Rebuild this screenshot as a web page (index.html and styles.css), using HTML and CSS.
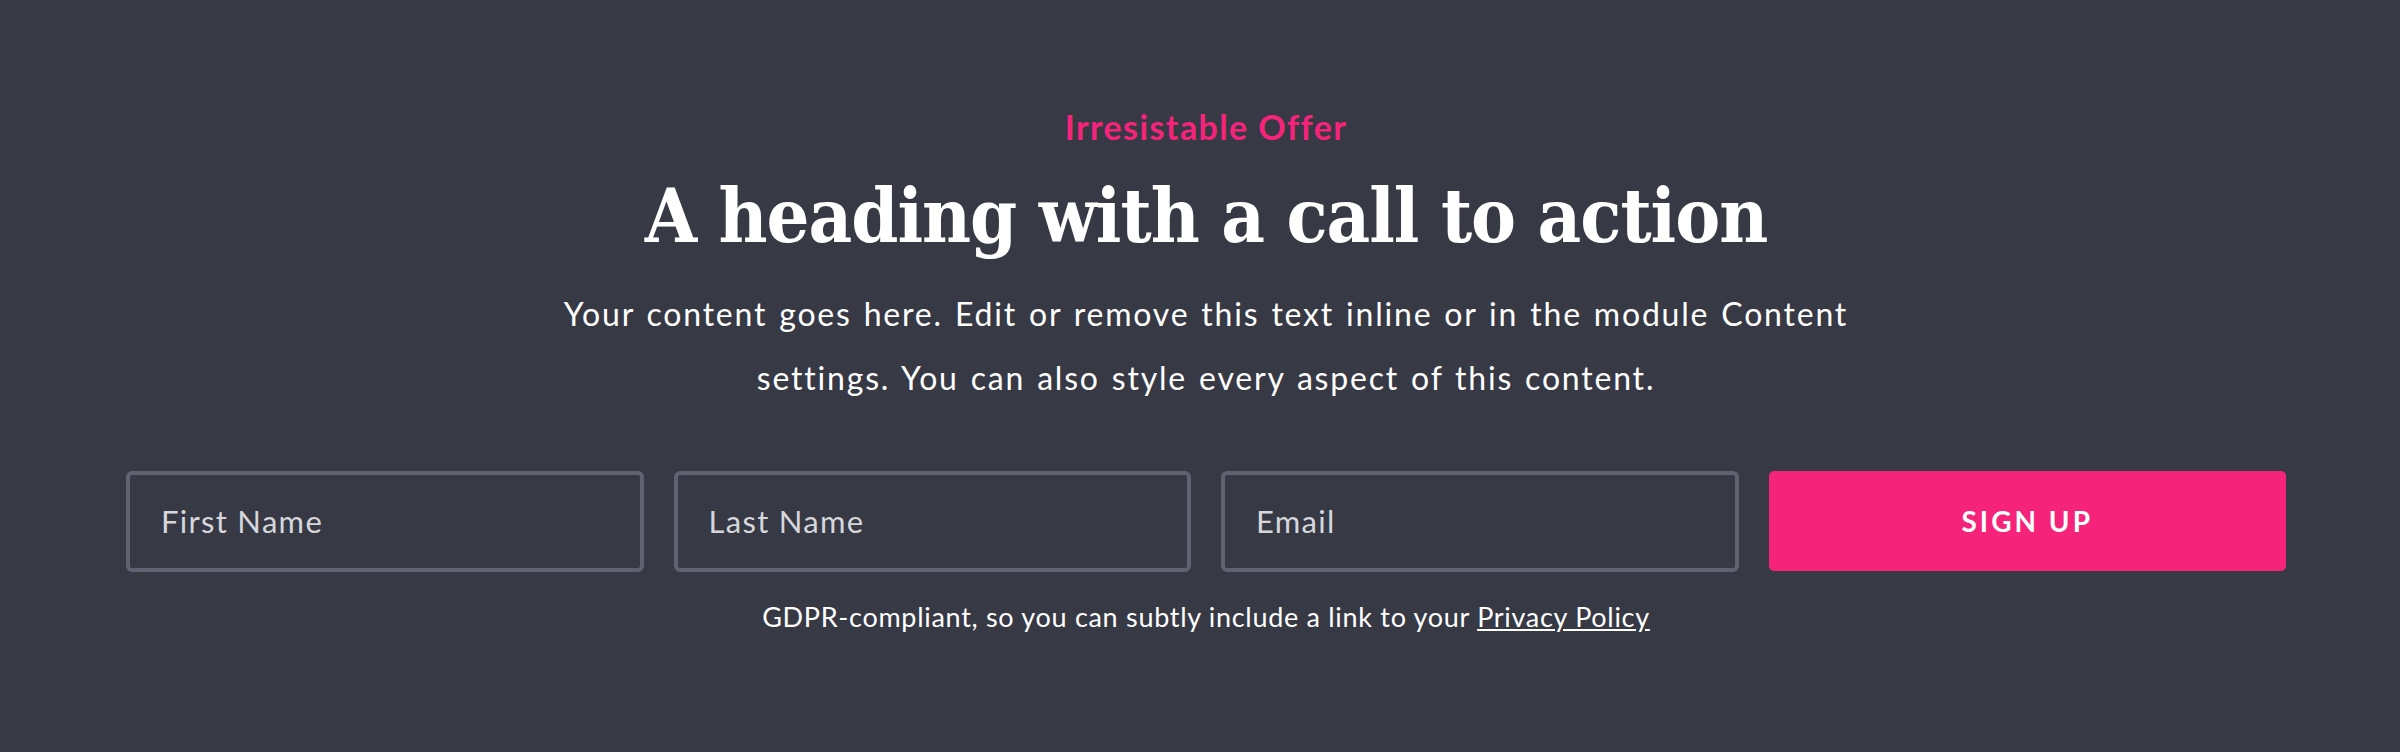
FILE: index.html
```html
<!DOCTYPE html>
<html lang="en">
<head>
<meta charset="UTF-8">
<meta name="viewport" content="width=device-width, initial-scale=1.0">
<title>Irresistable Offer</title>
<link rel="stylesheet" href="styles.css">
</head>
<body>
<section class="cta">
  <div class="cta-inner">
    <p class="eyebrow">Irresistable Offer</p>
    <h2 class="title">A heading with a call to action</h2>
    <p class="lead">Your content goes here. Edit or remove this text inline or in the module Content settings. You can also style every aspect of this content.</p>

    <form class="signup" onsubmit="return false">
      <input type="text" class="field" placeholder="First Name">
      <input type="text" class="field" placeholder="Last Name">
      <input type="email" class="field" placeholder="Email">
      <button type="submit" class="signup-btn">Sign Up</button>
    </form>

    <p class="note">GDPR-compliant, so you can subtly include a link to your <a href="#">Privacy Policy</a></p>
  </div>
</section>
</body>
</html>
```

FILE: styles.css
```css
* {
  box-sizing: border-box;
}
body {
  margin: 0;
  background: #373945;
  font-family: 'Lato', sans-serif;
  color: #ffffff;
}
.cta {
  height: 752px;
  padding: 107px 0 0 12px;
  overflow: hidden;
}
.cta-inner {
  width: 2160px;
  margin: 0 auto;
  text-align: center;
}
.eyebrow {
  margin: 0;
  font-size: 34px;
  line-height: 1.2;
  font-weight: 700;
  letter-spacing: 1.4px;
  color: #f5247a;
}
.title {
  margin: 23px 0 0;
  font-family: 'DejaVu Serif', serif;
  font-size: 75px;
  line-height: 1.2;
  font-weight: 700;
  font-stretch: condensed;
  letter-spacing: -1px;
}
.lead {
  max-width: 1340px;
  margin: 21px auto 0;
  font-size: 32px;
  line-height: 64px;
  letter-spacing: 1.8px;
  word-spacing: 2px;
}
.signup {
  display: grid;
  grid-template-columns: repeat(4, 1fr);
  gap: 30px;
  margin-top: 61px;
}
.field {
  height: 101px;
  padding: 0 31px;
  border: 4px solid #5f6270;
  border-radius: 6px;
  background: transparent;
  font-family: 'Lato', sans-serif;
  font-size: 31px;
  letter-spacing: 1.3px;
  color: #ffffff;
  outline: none;
}
.field::placeholder {
  color: #d6d7dc;
}
.signup-btn {
  height: 100px;
  border: none;
  border-radius: 5px;
  background: #f5247a;
  font-family: 'Lato', sans-serif;
  font-size: 28px;
  font-weight: 700;
  letter-spacing: 3px;
  text-transform: uppercase;
  color: #ffffff;
  cursor: pointer;
}
.note {
  margin: 25px 0 0;
  font-size: 27px;
  line-height: 1.5;
  letter-spacing: 0.7px;
}
.note a {
  color: #ffffff;
}
```
